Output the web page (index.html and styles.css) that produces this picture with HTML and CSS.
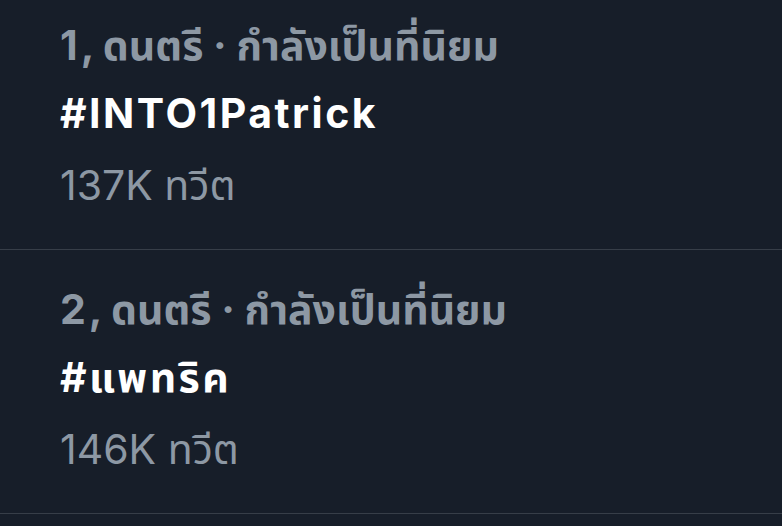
FILE: index.html
```html
<!DOCTYPE html>
<html lang="th">
<head>
<meta charset="utf-8">
<link rel="stylesheet" href="styles.css">
</head>
<body>
<div class="list">
  <div class="trend first">
    <div class="meta">1<span class="comma">,</span> ดนตรี · กำลังเป็นที่นิยม</div>
    <div class="tag">#INTO1Patrick</div>
    <div class="count">137K ทวีต</div>
  </div>
  <div class="trend">
    <div class="meta">2<span class="comma">,</span> ดนตรี · กำลังเป็นที่นิยม</div>
    <div class="tag">#แพทริค</div>
    <div class="count">146K ทวีต</div>
  </div>
</div>
</body>
</html>
```
FILE: styles.css
```css
html, body {
  margin: 0;
  padding: 0;
  background: #171e29;
}
body {
  font-family: Inter, "Noto Sans", "Noto Sans Thai", sans-serif;
  width: 782px;
  height: 526px;
  overflow: hidden;
}
.list {
  display: flex;
  flex-direction: column;
}
.trend {
  display: flex;
  flex-direction: column;
  padding: 34px 0 39px 60px;
  border-bottom: 1px solid #373e48;
  font-size: 41px;
  line-height: 50px;
}
.trend.first {
  padding-top: 20px;
}
.meta {
  color: #8d98a4;
  font-weight: 700;
  white-space: nowrap;
}
.comma {
  margin-left: 3px;
}
.tag {
  margin-top: 18px;
  color: #ffffff;
  font-weight: 700;
  letter-spacing: 2.5px;
  white-space: nowrap;
}
.count {
  margin-top: 22px;
  color: #8d98a4;
  font-weight: 400;
  white-space: nowrap;
}
```
